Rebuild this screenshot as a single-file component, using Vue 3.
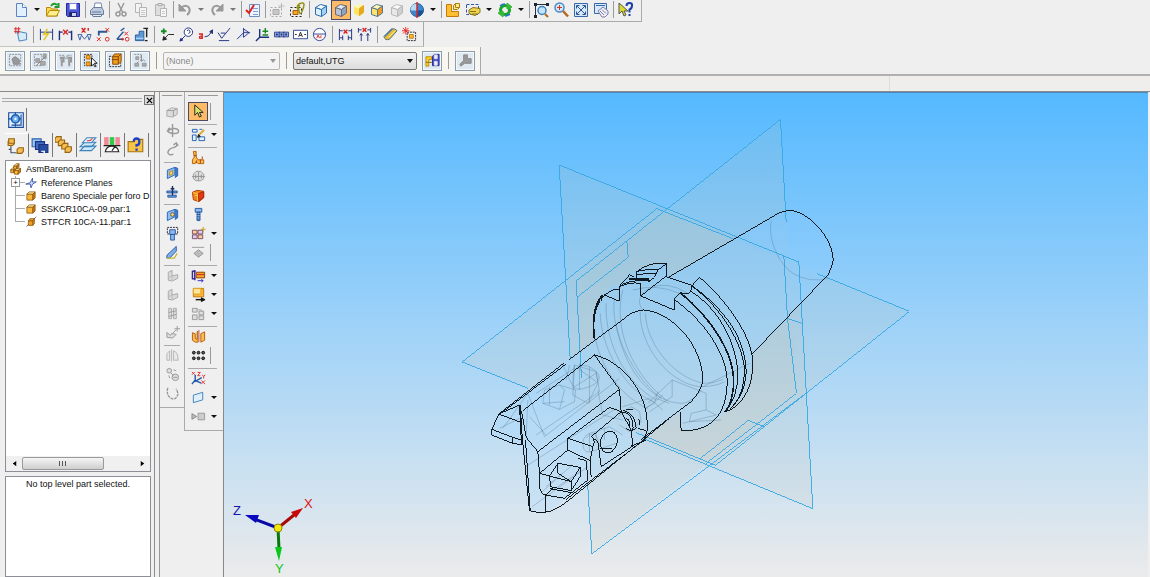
<script setup>
import { ref } from 'vue'

const p = (d, stroke, fill = 'none', w = 1) =>
  `<path d="${d}" stroke="${stroke}" fill="${fill}" stroke-width="${w}"/>`
const box = (x, y, s, f, t, r, o) =>
  p(`M${x} ${y + 3}h${s}v${s}h-${s}z`, o, f) +
  p(`M${x} ${y + 3}l3-3h${s}l-3 3z`, o, t) +
  p(`M${x + s} ${y + 3}l3-3v${s}l-3 3z`, o, r)
const gold = (x, y, s) => box(x, y, s, '#f8b83c', '#ffe79a', '#c97a12', '#8a5208')
const wire = (c, f, t, r) =>
  p('M2.5 5.5l6 2v7l-6-2z', c, f) + p('M2.5 5.5l5-3 6 1.500-5 3.500z', c, t) + p('M8.500 7.500l5-3.500v7l-5 3.500z', c, r)
const chip = (x, y) => p(`M${x} ${y + 1}l1.500-1.500h4v3.500l-1.500 1.500h-4z`, '#9a6410', '#f5bd52')
const planeBlue = p('M2.500 5.500l8-3v8l-8 4z', '#2a62b8', '#8cc0f2') + p('M10.500 2.500l3 1v8l-3 2', '#2a62b8', '#3d78c8')
const grayL = p('M3.500 4.500l4-2v6l6-1.500v4l-6 3-4-1z', '#a9a9a9', '#d9d9d9') + p('M7.500 8.500l-4 2M7.500 8.500v5', '#bbb')

const icons = {
  new: p('M3.500 1.500h6l4 4v9h-10z', '#5b86c4', '#e2f0ff') + p('M9.500 1.500v4h4', '#5b86c4', '#fff'),
  open: p('M1.500 5.500h4l1 1.500h6v7h-11z', '#b98b10', '#ffd84d') + p('M1.500 14l3-5.500h10l-3 5.500z', '#b98b10', '#fff08a') + p('M6 4q3-4 6-1M13.500 1v4h-4', '#1b9c2c', 'none', 2),
  save: p('M1.500 1.500h13v13h-12l-1-1z', '#242a9a', '#4a55d8') + p('M4.500 1.500h7v6h-7z', '#8088dd', '#fff') + p('M4.500 10.500h7v4h-7z', '#22266a', '#cdd2f4') + p('M6 11v3', '#22266a', 'none', 2),
  print: p('M5 6l1-5h6l1 5', '#7788a8', '#fff') + p('M1.500 8.500l3-3h8l2 3v4h-13z', '#687c9c', '#bccbe0') + p('M3 12.500h10l-1 2H4z', '#687c9c', '#e7eef8') + p('M3 10h9', '#6a7c98'),
  cut: p('M5 1l4.500 9M11 1L6.500 10', '#999', 'none', 1.500) + '<circle cx="5" cy="12" r="2" stroke="#999" fill="none" stroke-width="1.500"/><circle cx="11" cy="12" r="2" stroke="#999" fill="none" stroke-width="1.500"/>',
  copy: p('M2.500 1.500h6v9h-6z', '#b4b4b4', '#f4f4f4') + p('M6.500 5.500h7v9h-7z', '#b4b4b4', '#f4f4f4') + p('M8 8.500h4M8 10.500h4M8 12.500h4', '#c8c8c8'),
  paste: p('M2.500 2.500h9v11h-9z', '#b4b4b4', '#dedede') + p('M5 1.500h4v2H5z', '#aaa', '#eee') + p('M7.500 6.500h6v8h-6z', '#b4b4b4', '#f8f8f8') + p('M9 9.500h3M9 11.500h3', '#c8c8c8'),
  undo: p('M4 6q4-4 7.500-1 3 4-1.500 8', '#9a9a9a', 'none', 2) + p('M2 2v7h7z', '#9a9a9a', '#9a9a9a'),
  redo: p('M12 6q-4-4-7.500-1-3 4 1.500 8', '#9a9a9a', 'none', 2) + p('M14 2v7H7z', '#9a9a9a', '#9a9a9a'),
  check: p('M4.500 2.500h10v12h-10z', '#6f8fc0', '#edf5ff') + p('M8 6.500h5M8 9.500h5M8 12.500h5', '#7da0d8') + p('M1 8l3 3 5-8', '#e02020', 'none', 2),
  grayDash: '<path d="M1.500 5.500h11v9h-11z" fill="none" stroke="#aaa" stroke-dasharray="2 2"/>' + p('M4 7.500h6v5H4z', '#aaa', '#c8c8c8') + p('M12.500 1v6M9.500 4h6', '#bbb'),
  dashLink: '<path d="M1.500 5.500h11v9h-11z" fill="none" stroke="#222" stroke-dasharray="2 2"/>' + p('M4 8.500h5v4H4z', '#a8600c', '#f6a62c') + p('M9 8q-2-5 2-6.500t4 1-2 7-3-.5 1-6', '#94921a', 'none', 1.500),
  wire1: wire('#2b6cae', '#dcf0ff', '#f4fbff', '#a6d2f4'),
  wire2: wire('#6b6a78', '#b8c4d8', '#dfe7ef', '#8fa4c4'),
  shade1: p('M3.500 4.500l5 2v7l-5-2z', '#ffe468', '#ffe468') + p('M3.500 4.500l4-2 5 1-4 3z', '#fff7b0', '#fff7b0') + p('M8.500 6.500l4-3v7l-4 3z', '#e7a91c', '#e7a91c'),
  shade2: wire('#53779a', '#ffe468', '#fff7b0', '#f09c18'),
  shade3: wire('#b9b9b9', '#e8e8e8', '#f8f8f8', '#cfcfcf'),
  globe: '<circle cx="8" cy="8" r="6.500" fill="#3c87cf" stroke="#2a5d9a"/>' + p('M8 1.500q-7 1-6.500 7h6.500z', 'none', '#b9dcf5') + p('M8 8.500h6.500q-1 6-6.500 6z', 'none', '#1c4f96') + p('M8 0v16', '#d02828', 'none', 1.500),
  goldL: p('M1.500 2.500h5v7h7v5h-12z', '#c47a0c', '#ffbf2e') + p('M8.500 3.500l2-2h4v4l-2 2h-4z', '#a8820c', '#ffe98a') + p('M10.500 1.500v4h4', '#a8820c'),
  dashSel: '<path d="M1.500 2.500h12v10h-12z" fill="none" stroke="#2b57b0" stroke-dasharray="3 1.500"/>' + p('M4 8l4-2.500 7 1v4l-5 3-6-2z', '#8c7410', '#f0d452') + p('M5 9.500h6M7 12h5', '#857018'),
  swirl: '<circle cx="8" cy="8" r="4.500" fill="none" stroke="#1aa628" stroke-width="3"/>' + p('M3 4q2-2 5-2M13 12q-2 2-5 2', '#2d6fd0', 'none', 1.500) + p('M10 1l5 4-5 2zM6 15l-5-4 5-2z', '#36b93a', '#36b93a'),
  zoomArea: p('M2.500 14V2.500H14', '#26303e', 'none', 1) + p('M1 1h3v3H1zM13 1h3v3h-3zM1 13h3v3H1z', 'none', '#20242c') + '<circle cx="9" cy="8.500" r="4" fill="#bfe4ff" stroke="#3f7fb8" stroke-width="1.500"/>' + p('M12 12l3 3', '#b36a1a', 'none', 2),
  zoomIn: '<circle cx="6.500" cy="5.500" r="4.500" fill="#cfeaff" stroke="#4d8bc4" stroke-width="1.500"/>' + p('M4 5.500h5M6.500 3v5', '#d8341c') + p('M10 9l5 5.500', '#b36a1a', 'none', 2.500),
  fit: p('M1.500 1.500h13v13h-13z', '#3768a8', '#d7e9fb') + p('M4 4l8 8M12 4l-8 8', '#2c5593', 'none', 1) + p('M3.500 6.500V3.500h3M9.500 3.500h3v3M12.500 9.500v3h-3M6.500 12.500h-3v-3', '#2c5593'),
  pan: p('M1.500 1.500h12v10h-12z', '#3768a8', '#d7e9fb') + p('M3 3.500h9', '#3768a8') + p('M5 9l5-4 5 4v3l-3 3h-3z', '#777faa', '#f3f0f7') + p('M7 9l4 4M9 7.500l4 4', '#777faa'),
  help: p('M2 1v11l3-3 2 5 2-1-2-4h4z', '#555', '#d8dc30') + p('M9.500 4q0-3 3-3t2.500 3-2.500 3.500v3M12.500 12v2', '#1c3fa8', 'none', 2),

  sketch: p('M4.500 4.500l10 2v7l-8 1.500z', '#3f7fb8', '#d5ebfa') + p('M1 2h7M1 5h6M3 0v7M6 0v7', '#d22'),
  dim1: p('M1.500 2v12M14.500 2v12M2 5.500h12', '#1d2f80') + p('M9 2L5 8l5-1-5 7', '#e0c61a', 'none', 1.500),
  dim2: p('M1.500 4v10M14.500 4v10M2 5.500h3M11 5.500h3', '#1d2f80', 'none', 1.500) + p('M5.500 3l5 5M10.500 3l-5 5', '#d22', 'none', 1.500),
  dim3: p('M1 8h4l-2 6zM11 8h4l-2 6zM5 9l3 4 3-4', '#3a5fa8', 'none', 1) + p('M5 1l4 5M9 1L5 6M12 1v3', '#d22', 'none', 1.500),
  dim4: p('M3 9V5h9', '#2c5593', 'none', 2) + p('M1 11l4 4M5 11l-4 4M10 1l4 4M14 1l-4 4', '#d22') + '<circle cx="12" cy="13" r="2" stroke="#d22" fill="none"/>',
  dim5: p('M2 13l7-8M2 13h7M6 4l4-3', '#2c5593', 'none', 1.500) + p('M10 5l4 4M14 5l-4 4', '#d22') + '<circle cx="13" cy="13" r="2" stroke="#d22" fill="none"/><circle cx="8" cy="13" r="1" stroke="#d22" fill="none"/>',
  dim6: p('M1.500 8.500h4v-4h5v10h-9z', '#2a5a98', '#5f9ad6') + p('M10 1.500h5M13.500 2v9M11.500 14.500h3', '#222', 'none', 1.500) + p('M2 12h8', '#cfe4fa'),
  plusLine: p('M1 4.500h6M4 1.500v6', '#168a22', 'none', 2) + p('M4 13l5-5h6', '#222', 'none', 1) + p('M3 14l1-4 3 3z', '#222', '#222'),
  balloon: '<circle cx="10" cy="5.500" r="4.500" fill="#fff" stroke="#1d2f80"/>' + p('M7 9l-6 6M8.500 4q1.500-2 3 0t-1.500 3', '#1d2f80') + p('M1 15l1-3 2 2z', '#1d2f80', '#1d2f80'),
  aLine: p('M1 7.500h3.500v4.500H2q-1.500-2 2-2.500', '#d22', 'none', 1.500) + p('M7 10.500l4-1 4-5', '#1d2f80', 'none', 1) + p('M15.500 3v4l-3-2z', '#1d2f80', '#1d2f80'),
  rough: p('M1 6l4 6 9-11M4 6.500h5M2 14.500h11', '#1d2f80', 'none', 1),
  weld: p('M1 13l7-7h7M8 1v10M8 11l6-5-6-4', '#2c3f90', '#cfd9f4'),
  edgeC: p('M5 2v9h10M5 11l-4 4', '#1d2f80', 'none', 1.500) + p('M8 4.500h6M11 1v6M8 8.500h6', '#168a22', 'none', 1.500),
  fcf: p('M.5 5.500h15v5h-15z', '#2a4494', '#a3b6e4') + p('M5.500 5v6M10.500 5v6', '#1d2f80') + p('M2 8h2M7 8h2M12 8h2', '#1d2f80', 'none', 2),
  datumF: p('M.5 3.500h15v9h-15z', '#2a4494', '#fff') + p('M2 8h2M12 8h2M6 10.500l2-5 2 5M7 9h2', '#222'),
  datumT: '<circle cx="8" cy="8" r="6.500" fill="#fff" stroke="#2c3f90"/>' + p('M1.500 7.500h13', '#2c3f90') + p('M5 12l1.500-3.500L8 12M9.500 9v3', '#d22'),
  dx1: p('M1.500 2v12M14.500 2v12M5 9v5M11 9v5M2 11.500h3M11 11.500h3', '#1d2f80') + p('M2 4h3M11 4h3', '#1d2f80') + p('M6 3l4 4M10 3L6 7', '#d22', 'none', 1.500),
  dx2: p('M1.500 1v5M14.500 1v5M2 3h3M11 3h3M4.500 7v8M11.500 7v8M3 9l1.500-2L6 9M10 9l1.500-2L13 9', '#1d2f80') + p('M6 1l4 4M10 1L6 5', '#d22', 'none', 1.500),
  ruler: p('M1 10l8-8q4-1 6 2l-8 9q-5 2-6-3z', '#54707c', '#e6bc3a') + p('M2 10l8-8', '#3c78b8', 'none', 1.500) + p('M6 11l7-7', '#fff0a0'),
  flash: '<path d="M5.500 5.500h9v9h-9z" stroke="#223" fill="none" stroke-dasharray="2 1"/>' + p('M8 8h4v4H8z', '#c47a0c', '#ffbf2e') + p('M0 4h8M4 0v8M1 1l6 6M7 1L1 7', '#e22', 'none', 1),

  dashA: '<path d="M1.500 1.500h12v12h-12z" stroke="#8b8f95" fill="none" stroke-dasharray="2 1"/>' + p('M5 9q-2-4 3-5l4 3v5H6z', '#888', '#999'),
  dashB: '<path d="M1.500 1.500h8v12h-8z" stroke="#8b8f95" fill="none" stroke-dasharray="2 1"/>' + p('M3 6h4v4H3zM11 1h3v5h-3zM8 9h5v4H8z', '#999', '#aaa') + p('M3 14L14 3', '#888'),
  dashC: '<path d="M1.500 2.500h5v3h3v-3h5" stroke="#8b8f95" fill="none" stroke-dasharray="2 1"/>' + p('M2 5h4v4H4v5M10 5h4v4h-2v5', '#999', '#aaa', 2),
  pick: '<path d="M1.500 1.500h8v12h-8z" stroke="#333" fill="none" stroke-dasharray="2 1"/>' + p('M3.500 2.500h4v4h-4zM3.500 9.500h4v4h-4z', '#b56a08', '#ffa91e') + p('M9 5v9l2-2 2 3 1-1-2-3h3z', '#111', '#fff'),
  stack: '<path d="M1.500 3.500h12v11h-12z" stroke="#333" fill="none" stroke-dasharray="2 1"/>' + p('M5 4l2-3h7v8l-3 3H5z', '#8c4b04', '#f59d1a') + p('M5 4h6v8M11 4l3-3M4 7h7', '#7d4208'),
  dashD: '<path d="M1.500 1.500h7v7" stroke="#8b8f95" fill="none" stroke-dasharray="2 1"/>' + p('M3 4h3v3H3zM2 11h4v3H2zM10 11h4v3h-4z', '#999', '#aaa') + p('M9 2v7l2-2 2 2M6 9l-2 2', '#888'),
  saveCfg: p('M1 4h6v3H4v7H1z', '#bb8d08', '#ffcf2e') + p('M1 10h8', '#8e6a05') + p('M8 3.500l2-2h5v12H8z', '#242a9a', '#4855bc') + p('M10 2h3v4h-3zM10 9h3v4h-3z', '#dde', '#eef'),
  blob: p('M6 2h4v4h4v5H7l-4 3-1-2 4-4z', '#888', '#999'),

  person: p('M1.500 1.500h13v13h-13z', '#1b4d9c', '#e4f1fd') + '<circle cx="7.500" cy="7" r="3.500" fill="#6fb2ee" stroke="#2261b8" stroke-width="1.500"/><circle cx="7.500" cy="7" r="1" fill="#fff"/>' + p('M7.500 1v2M7.500 11v3M1 7h3M11 7h2M12.500 3v10M4 12.500h8', '#1b4d9c'),
  tTree: chip(1, 3) + p('M3.500 8v6h5M3.500 11h-2', '#456') + chip(9, 10) + p('M1.500 1.500h5v4h-5z', '#9a6410', '#f5bd52'),
  tLib: p('M1 2.500h8v7H1z', '#2f62ae', '#98c4f0') + p('M4 5h8v7H4z', '#1d2f80', '#3f6fc4') + p('M7 7.500h8v7H7z', '#1d2f80', '#254c9e') + p('M9 13.500h3v1.500', '#eee', '#fff'),
  tFam: chip(0, 1) + chip(3, 4) + chip(6, 7) + chip(9, 10),
  tLay: p('M1 13l4-4h10l-4 4zM1 9.500l4-4h10l-4 4z', '#3d82ba', '#cde9f8') + p('M3 6l4-4.500h8L11 6z', '#3d82ba', '#e8f5fc') + p('M7 4q3 1 5-2', '#d33'),
  tSens: p('M1 1h4v7H1z', 'none', '#f2899b') + p('M6 1h4v7H6z', 'none', '#35c948') + p('M11 1h4v7h-4z', 'none', '#f2899b') + p('M.5 8.500h15M2 14q1-5 6-5t6 5zM8 13l3-4', '#222', '#fff'),
  tHelp: p('M1 5h5l1-2h7v11H1z', '#a47412', '#f8c443') + p('M6 5q0-3 2.500-3T11 5 8.500 8v1.500M8.500 11v2', '#1c3fc8', 'none', 2),

  asm: gold(1, 6, 4) + gold(6, 7, 5) + gold(5, 1, 4),
  refp: p('M1 9.500l6-2 3-6v5l5 0-5 3-2 5-1-5z', '#223f9c', '#cfdcff'),
  part: gold(2.5, 2.500, 8),
  part2: p('M4.500 6.500l2-3h6v6l-2 3h-6z', '#8a5208', '#f0a024') + p('M4.500 6.500h6v6M10.500 6.500l2-3M2 14l3-3M12 4l3-3', '#6b4510'),

  g1: p('M2 7l5-3 6 1v6l-5 3-6-1z', '#aaa', '#dcdcdc') + p('M2 7h7l4-2M9 7v6', '#999'),
  g2: p('M8 1v14M2 9q6-5 12-2M5 5q-5 5 3 6t6-4', '#999', 'none', 1.500),
  g3: p('M12 1q2 4-3 5T3 11q1 4 6 2M9 3l3-2 2 3', '#999', 'none', 1.500),
  cut1: planeBlue + p('M5 7l3-1v4l-3 1z', '#c48a10', '#ffd86a'),
  cut2: p('M2 7.500h11v2H2zM3 12h9v2H3z', '#2958a0', '#6fa6e4') + p('M8 2v10M6 5h4', '#1d2f60', '#2a4a80', 1.500),
  hole: planeBlue + '<circle cx="8" cy="8" r="2" fill="#ffd86a" stroke="#555"/>',
  dashBolt: '<path d="M2.500 1.500h11v7h-11z" stroke="#223" fill="none" stroke-dasharray="2 1"/>' + p('M5 4h6v5H5zM6 9h4v6H6z', '#2958a0', '#8cb8ec'),
  cham: p('M2 11L12 1.500v5L5 14H2z', '#2958a0', '#7db0ec') + p('M2 14h8l3-5', '#c9b83a', 'none', 1.500),
  gl: grayL,
  gbar: p('M4 2.500h3v11H4zM9 2.500h3v11H9z', '#aaa', '#ddd') + p('M4 7l8-2M4 11l8-2', '#999'),
  gplus: p('M2 8v5l6 1 4-4-5-1-1 2-4-3zM13 1v6M10 4h6M8 9l4-4', '#999', '#ddd'),
  gmir: p('M7 1.500v13M2 6l3-3v10H2zM9 3q5 1 5 10h-5z', '#b4b4b4', '#e8e8e8'),
  gpat: '<circle cx="4.500" cy="4" r="2.500" fill="#ddd" stroke="#999"/><circle cx="11" cy="11" r="3.500" fill="#ddd" stroke="#999"/>' + p('M6 6l3 3M9 3l3 1M4 9l1 3M9 11h4', '#999'),
  gcur: '<path d="M3 2Q1 9 6 13q6 3 8-5l-2-5" stroke="#999" fill="none" stroke-width="1.500" stroke-dasharray="3 1"/>',

  arrow: p('M4 1v11l3-3 2 5 2-1-2-4h4z', '#222', '#d9e26a'),
  layout: p('M1.500 2.500h5v3h-5zM1.500 8.500h4v6h-4zM8.500 10.500h6v4h-6z', '#2261b8', '#e2f2ff') + p('M8 9l6-6', '#d8a820', 'none', 2) + p('M7 11l1-3 2 2z', '#222', '#222') + p('M9 2.500h3', '#2261b8'),
  bend: p('M2.500 1.500h3v6l2 3h6v4h-6l-2-2-1 2h-3v-4l2-3z', '#b35d08', '#ffbd52') + p('M3 6h3M6 11v3M10 10v4M12 7v3', '#b33a08'),
  gconn: p('M2.500 5.500l3-3h5l3 3v5l-3 2h-5l-3-2zM8 3v10M1 8h14', '#999', '#ddd') + p('M5 6v4M11 6v4', '#888'),
  ocube: p('M1.500 4.500l5-2 7 1v7l-5 4-6-2z', '#b33a08', '#f2841c') + p('M7.500 6l6-2v6l-5 4z', '#a62808', '#e23a10') + p('M2 5l5 1v8M4 8h3', '#ffd24a'),
  bolt: p('M4.500 1.500h7v4h-7zM6.500 5.500h3v9h-3z', '#2958a0', '#8cb8ec') + p('M6 8h4M6 10.500h4M6 13h4', '#2958a0'),
  grid: p('M1.500 4.500h5v4h-5zM7.500 9.500h5v4h-5z', '#7a4a6a', '#ffd08a') + p('M7.500 4.500h5v4h-5zM1.500 9.500h5v4h-5z', '#7a4a6a', '#ded0e8') + p('M13 1v5M10.500 3.500h5', '#c8a010'),
  gdia: p('M1 2.500h13', '#999') + p('M8 5l5 4-5 4-5-4z', '#999', '#bbb'),
  move: p('M5.500 4.500h9v6h-9z', '#8a4208', '#f6a12a') + p('M1.500 3v9M1 3.500h4M1 11.500h4M4 2v11', '#3a2a98', 'none', 1.500) + p('M7 13.500h6M11 12l2 1.500-2 1.500', '#3a2ac8') + p('M6 7h8', '#c22'),
  drag: p('M2.500 1.500h11v9h-11z', '#c47a0c', '#f6b83a') + p('M2.500 1.500h8v6h-8z', '#e0a020', '#ffe69a') + p('M5 13.500h7', '#111', 'none', 1.500) + p('M11 11.500l4 2-4 2z', '#111', '#111'),
  ggrid: p('M1.500 2.500h5v4h-5zM8.500 5.500h5v4h-5zM1.500 9.500h5v5h-5zM8.500 10.500h5v4h-5z', '#999', '#ddd') + p('M6 4h5v2', '#aaa'),
  mirror: p('M1.500 4l3 1v5l2 1V3l1-1v12h-3l-3-2zM14.500 3l-4 2v9l4-2z', '#b35d08', '#ffbd52') + p('M8.500 1v13', '#c66'),
  dots: '<g fill="#555" stroke="#111"><circle cx="3" cy="5" r="1.500"/><circle cx="8" cy="5" r="1.500"/><circle cx="13" cy="5" r="1.500"/><circle cx="3" cy="11" r="1.500"/><circle cx="8" cy="11" r="1.500"/><circle cx="13" cy="11" r="1.500"/></g>',
  xyz: p('M4.500 4v7l7-4M4 10l7 3M4 10l-3 4', '#2357a8', 'none', 1.500) + p('M1 1l3 3M4 1L1 4M7 1.500h3L7 5h3M11 10l4 4M15 10l-4 4M12 4l1.500 2L15 4M13.500 6v2', '#d33'),
  plane: p('M2.500 5.500l10-3v8l-10 3z', '#3d82ba', '#ddf0fb'),
  gplay: p('M1 5l5 3-5 3z', '#888', '#bbb') + p('M7.500 4.500h7v7h-7z', '#999', '#ccc')
}

const row1 = 'new v open save | print | cut copy paste | undo u redo u | check | grayDash dashLink | wire1 wire2* shade1- shade2 shade3 globe v | goldL dashSel v swirl v | zoomArea zoomIn fit pan | help'.split(' ')
const row2 = 'sketch | dim1 dim2 dim3 dim4 dim5 dim6 | plusLine balloon aLine rough weld edgeC fcf datumF datumT | dx1 dx2 | ruler flash'.split(' ')
const row3 = ['dashA', 'dashB', 'dashC', 'pick', 'stack', 'dashD']
const col1 = 'g1 g2 g3 | cut1 cut2 | hole dashBolt cham | gl gl gbar gplus | gmir gpat gcur'.split(' ')
const col2 = 'arrow*/ | layoutv | bend gconn ocube bolt gridv gdia/ | movev dragv ggridv | mirror dots/ | xyz planev gplayv'.split(' ')
const tabs = ['tTree', 'tLib', 'tFam', 'tLay', 'tSens', 'tHelp']
const tree = [
  { icon: 'refp', text: 'Reference Planes', open: true },
  { icon: 'part', text: 'Bareno Speciale per foro D' },
  { icon: 'part', text: 'SSKCR10CA-09.par:1' },
  { icon: 'part2', text: 'STFCR 10CA-11.par:1' }
]
const name = (t) => t.replace(/[*/-]|v$/g, '')
const tab = ref('tTree')
const style = ref('none')
const config = ref('utg')
</script>

<template>
  <div class="app">
    <header>
      <div class="bar one">
        <template v-for="(t, i) in row1" :key="i">
          <i v-if="t === '|'" class="sep"></i>
          <button v-else-if="t === 'v' || t === 'u'" class="drop" :class="{ dim: t === 'u' }" aria-label="More"></button>
          <button v-else class="tool" :class="{ on: t.includes('*'), slim: t.includes('-') }" :aria-label="name(t)">
            <svg viewBox="0 0 16 16" v-html="icons[name(t)]"></svg>
          </button>
        </template>
      </div>
      <div class="bar two">
        <template v-for="(t, i) in row2" :key="i">
          <i v-if="t === '|'" class="sep"></i>
          <button v-else class="tool" :aria-label="t"><svg viewBox="0 0 16 16" v-html="icons[t]"></svg></button>
        </template>
      </div>
      <div class="bar three">
        <button v-for="t in row3" :key="t" class="framed" :aria-label="t"><svg viewBox="0 0 16 16" v-html="icons[t]"></svg></button>
        <i class="sep"></i>
        <span class="pick off">
          <select v-model="style" aria-label="Style" disabled><option value="none">(None)</option></select>
        </span>
        <i class="sep"></i>
        <span class="pick">
          <select v-model="config" aria-label="Configuration"><option value="utg">default,UTG</option></select>
        </span>
        <button class="framed" aria-label="Save configuration"><svg viewBox="0 0 16 16" v-html="icons.saveCfg"></svg></button>
        <i class="sep"></i>
        <button class="framed" aria-label="Activate part"><svg viewBox="0 0 16 16" v-html="icons.blob"></svg></button>
      </div>
      <div class="ribbon"><i></i></div>
    </header>

    <main>
      <aside class="dock">
        <div class="grip"><i></i><button class="close" aria-label="Close">
          <svg viewBox="0 0 8 8"><path d="M1 1l6 6M7 1l-6 6" stroke="#000" stroke-width="1.500" /></svg>
        </button></div>
        <button class="pane" aria-label="EdgeBar"><svg viewBox="0 0 16 16" v-html="icons.person"></svg></button>
        <div class="tabs">
          <button v-for="t in tabs" :key="t" :class="{ cur: t === tab }" :aria-label="t" @click="tab = t">
            <svg viewBox="0 0 16 16" v-html="icons[t]"></svg>
          </button>
        </div>
        <div class="panel">
          <ul class="tree">
            <li class="root"><svg viewBox="0 0 16 16" v-html="icons.asm"></svg><span>AsmBareno.asm</span></li>
            <li v-for="n in tree" :key="n.text">
              <b class="branch"><em v-if="n.open">+</em></b>
              <svg viewBox="0 0 16 16" v-html="icons[n.icon]"></svg><span>{{ n.text }}</span>
            </li>
          </ul>
          <div class="scroll">
            <button aria-label="Scroll left"><svg viewBox="0 0 8 8"><path d="M6 1v6L2 4z" /></svg></button>
            <div class="track"><div class="thumb"><i></i><i></i><i></i></div></div>
            <button aria-label="Scroll right"><svg viewBox="0 0 8 8"><path d="M2 1v6l4-3z" /></svg></button>
          </div>
        </div>
        <div class="note">No top level part selected.</div>
      </aside>

      <div class="rail a">
        <div class="strip">
          <template v-for="(t, i) in col1" :key="i">
            <i v-if="t === '|'" class="hsep"></i>
            <button v-else class="tool" :aria-label="t"><svg viewBox="0 0 16 16" v-html="icons[t]"></svg></button>
          </template>
        </div>
      </div>
      <div class="rail b">
        <div class="strip">
          <template v-for="(t, i) in col2" :key="i">
            <i v-if="t === '|'" class="hsep"></i>
            <div v-else class="line">
              <button class="tool" :class="{ on: t.includes('*') }" :aria-label="name(t)"><svg viewBox="0 0 16 16" v-html="icons[name(t)]"></svg></button>
              <button v-if="/v$/.test(t)" class="drop" aria-label="More"></button>
              <i v-if="t.includes('/')" class="sep"></i>
            </div>
          </template>
        </div>
      </div>

      <section class="view">
        <svg class="model" viewBox="225 93 923 484">
          <defs>
            <linearGradient id="skin" x1="0" y1="0" x2="0" y2="1">
              <stop offset="0" stop-color="#7ec6fd" />
              <stop offset=".5" stop-color="#a2d5fa" />
              <stop offset="1" stop-color="#c4e0f5" />
            </linearGradient>
          </defs>
          <g fill="#d0c8b0" fill-opacity=".14">
            <path d="M560 165L799 262 813 509 574 412z" />
            <path d="M781 119L576 281 592 554 797 393z" />
            <path d="M463 362L657 208 910 311 716 465z" />
          </g>
          <g transform="translate(450 100) scale(.33333)" fill="none" stroke-width="3">
            <path class="skin" d="M660 530L990 338Q1010 330 1030 332C1090 345 1150 420 1151 480Q1150 500 1135 525L908 762C905 850 880 910 825 936Q780 995 695 992L692 935 300 1232 242 1235 218 1035 126 1005 127 988 148 942 435 720C425 640 440 570 510 550L560 510 650 490z" />
            <g class="plane">
              <path d="M362 775L329 195 1048 486 1090 1226 585 1017" />
              <path d="M1010 366L993 58 380 543 396 835M1003 468L1014 655 1041 880 932 965M1069 880L427 1362 414 1145" />
              <path d="M235 865L38 786 622 326 850 416M1103 521L1380 634 798 1096 560 998" />
              <path d="M532 423L536 472 382 592M1014 655L1057 670M752 1076L896 961 943 980M932 965L770 1090" />
            </g>
            <g class="ghost">
              <path d="M966 362C955 400 975 480 1030 520Q1080 550 1140 535" />
              <g transform="translate(360 420)">
                <path d="M92 220C95 330 170 450 250 485M110 190C105 310 170 430 260 480M135 175C120 270 190 410 275 475M160 150C130 260 185 400 290 480M78 298C100 400 170 480 235 505" />
                <path d="M222 210C200 190 210 160 240 145Q290 120 355 160M212 215C210 320 300 430 390 440Q440 440 465 425M228 220C230 310 310 410 400 430Q430 432 460 418M140 250C160 380 240 490 340 490Q370 485 395 450" />
                <path d="M235 490L308 420V470L240 515M308 420L410 460V510L365 520 360 545M410 510L440 525 340 550M360 545L455 540M540 370L400 440M190 150Q260 130 330 160M260 475L300 490M225 505L255 490 265 455" />
              </g>
              <g transform="translate(0 720)">
                <path d="M285 150L330 135 378 150 375 185 330 208 280 190zM330 135L345 150 330 208M300 140V195M280 190L345 185M375 75L440 95 445 130 415 190 370 165zM370 95Q400 60 435 90T420 140 370 130 375 75M385 85L440 125M375 140L440 100M390 70V150M420 80V190" />
                <path d="M235 160L160 265M235 160L285 290 510 115M235 180L230 290M150 265L210 235M260 285L450 155 440 95M340 75L375 150M360 75L350 120M240 230L290 285M228 380L500 205M248 500L415 380M260 160L375 85M445 150L460 225 520 240" />
                <path d="M400 310Q400 280 440 275L480 260 520 285M400 310Q400 350 440 330L500 310M410 295Q440 260 450 320M420 280V335M520 200L600 175M505 230L545 200 570 215 575 245 540 275 510 255M590 205L640 165M600 175L640 210" />
                <path d="M290 440L370 375M310 450L390 395M275 458L340 400M440 275V310M465 265V300" />
              </g>
            </g>
            <g class="edge">
              <path d="M660 530L990 338Q1010 330 1030 332C1090 345 1150 420 1151 480Q1150 500 1135 525L908 762" />
              <g transform="translate(360 420)">
                <path d="M0 358L165 235Q190 212 222 210C310 215 400 320 400 420Q398 450 365 485L215 598M75 298C68 240 75 175 130 150L148 148M105 165L150 184V140L158 128 180 105 195 112M150 140Q170 118 245 122M200 118V97Q235 65 290 70V108L214 168V130Q180 125 150 140M200 95Q240 85 265 90L290 72M265 90L255 112 240 124 215 118M200 105Q230 98 262 100M214 168L314 210V178L332 158 355 162M290 110L365 135" />
                <path d="M355 162Q367 155 365 140L390 112C470 180 550 290 550 370C550 440 520 500 465 516M314 178C400 240 475 340 473 430C470 520 430 575 335 572L332 515M365 155C440 200 500 300 505 400Q505 470 470 512M370 140C460 210 520 310 525 390Q525 460 490 498M366 136C470 210 530 300 530 400Q525 470 480 508" />
                <path d="M332 158C420 230 500 340 492 440Q485 500 465 516M75 298C68 240 75 190 100 165M180 118H240" stroke-width="5" />
              </g>
              <g transform="translate(0 720)">
                <path d="M345 68L148 222 127 268 126 285 190 310 216 314M350 72L160 216M148 222L210 195M148 222L216 248M127 268L190 292V310M190 292L216 300M210 195L216 315" />
                <path d="M212 195L218 290 240 512Q270 522 300 515Q340 498 365 475L550 325 660 235M350 478L590 295M228 300L242 512" />
                <path d="M220 212L435 45 510 148 265 335 230 292 216 212M265 335L270 400V440Q272 460 288 465V515M435 45C520 65 600 160 593 270Q590 290 575 310M510 148L515 215M480 202L355 295V330L270 400 300 408M480 202L515 215 545 270 550 318M355 330L422 362 425 412M355 295L430 320 422 362M430 320Q440 300 425 290L515 215M425 290L445 305 455 380 550 318M452 325H488" />
                <ellipse cx="478" cy="306" rx="25" ry="33" transform="rotate(15 478 306)" />
                <path d="M325 370L392 382 365 425 300 408zM300 408L303 440 365 452 392 410V382M365 425V452M303 446L365 458M325 370V400L365 425M288 465L345 475 415 420 410 362 385 355M288 465L310 445" />
                <path d="M512 215Q545 215 550 250T530 265M520 210Q560 225 560 265L545 272M530 235Q545 240 540 260M530 210H550M568 238Q575 245 568 255M565 265L590 272M545 318L590 300" />
              </g>
            </g>
          </g>
        </svg>
        <svg class="triad" viewBox="0 0 90 80">
          <path d="M48 33L24 24" stroke="#0808a8" stroke-width="3" />
          <path d="M15 20l14 0-3 8z" fill="#0808c0" />
          <path d="M48 33L64 20" stroke="#a80808" stroke-width="3" />
          <path d="M73 13l-12 4 5 6z" fill="#c80808" />
          <path d="M48 33L49 54" stroke="#087808" stroke-width="3" />
          <path d="M49 66l-4-14h7z" fill="#08c818" />
          <circle cx="48" cy="33" r="4" fill="#f4e808" stroke="#8c8408" />
          <text x="3" y="20" fill="#1414b0">Z</text>
          <text x="74" y="13" fill="#e01010">X</text>
          <text x="45" y="78" fill="#08c818">Y</text>
        </svg>
      </section>
    </main>
  </div>
</template>

<style>
body { margin: 0; background: #efefef; }
</style>

<style scoped>
.app { min-height: 100vh; display: flex; flex-direction: column; overflow: hidden; font: 9px/14px "Liberation Sans", Arial, sans-serif; color: #111; background: #efefef; }
* { box-sizing: border-box; }
button { border: 0; padding: 0; background: none; flex: none; display: flex; align-items: center; justify-content: center; }
svg { display: block; }
.bar { display: flex; align-items: center; width: max-content; border-right: 1px solid #aaa; border-bottom: 1px solid #aaa; }
.one { height: 22px; padding: 0 6px 2px 11px; }
.two { height: 25px; padding: 0 4px 0 11px; border-bottom-color: #c4c4c4; }
.three { height: 27px; padding: 0 5px; gap: 5px; background: #f8f6f1; border-bottom: 0; }
.tool { width: 20px; height: 20px; }
.tool svg { width: 16px; height: 16px; flex: none; }
.two .tool { width: 19px; }
.two .tool svg { width: 15px; height: 15px; }
.tool.slim { width: 16px; }
.on { background: #fdbb68; border: 1px solid #4b4a62; }
.sep { width: 4px; height: 17px; flex: none; display: flex; justify-content: center; }
.sep::before { content: ""; width: 1px; background: #9a9a9a; }
.two .sep { width: 7px; }
.three .sep { width: 3px; }
.drop { width: 12px; height: 16px; }
.drop::before { content: ""; border: 3px solid transparent; border-top-color: #111; border-bottom: 0; }
.drop.dim::before { border-top-color: #777; }
.framed { width: 20px; height: 20px; border: 1px solid #8b9dae; background: #dfe9f2; box-shadow: inset 0 0 0 1px #f5f9fc; }
.framed svg { width: 15px; height: 15px; }
.pick { position: relative; display: flex; width: 124px; }
.pick.off { width: 117px; }
.pick::after { content: ""; position: absolute; right: 4px; top: 7px; border: 3px solid transparent; border-top: 4px solid #111; border-bottom: 0; pointer-events: none; }
.pick.off::after { border-top-color: #999; }
select { appearance: none; width: 100%; height: 18px; padding: 0 2px; border: 1px solid #777; border-radius: 2px; background: linear-gradient(#f3f3f3, #ddd); font: inherit; color: #111; }
select:disabled { background: #f4f4f4; border-color: #b5b5b5; color: #888; opacity: 1; }
.ribbon { height: 18px; border-top: 2px solid #b0b0b0; border-bottom: 1px solid #8b8b8b; background: #f0eeed; display: flex; }
.ribbon i { width: 77.4%; border-right: 1px solid #ddd; }
main { flex: 1; display: flex; min-height: 0; }

.dock { width: 155px; flex: none; display: flex; flex-direction: column; padding-left: 5px; border-right: 1px solid #8d8d8d; }
.grip { display: flex; align-items: center; height: 16px; gap: 2px; margin-left: -3px; }
.grip i { flex: 1; height: 4px; border: 1px solid #aaa; border-width: 1px 0; }
.close { width: 10px; height: 10px; border: 1px solid #777; background: #ddd; }
.close svg { width: 7px; height: 7px; }
.pane { width: 22px; height: 23px; border-right: 1px solid #777; }
.pane svg { width: 18px; height: 18px; }
.tabs { display: flex; height: 26px; padding-top: 2px; margin-bottom: 3px; }
.tabs button { width: 24px; border-right: 1px solid #777; padding-right: 2px; }
.tabs button.cur { border-top: 1px solid #fff; }
.tabs svg { width: 18px; height: 18px; }
.panel { flex: 1; margin-right: 3px; background: #fff; border: 1px solid #8e8e96; display: flex; flex-direction: column; min-height: 0; }
.tree { list-style: none; margin: 0; padding: 1px 0 0 4px; flex: 1; }
.tree li { display: flex; align-items: center; height: 13px; white-space: nowrap; }
.tree .root { height: 14px; }
.tree svg { width: 12px; height: 12px; flex: none; margin-right: 4px; }
.tree li:not(.root) { padding-left: 1px; }
.branch { position: relative; width: 14px; height: 13px; flex: none; background: linear-gradient(#aaa, #aaa) 4px 6px / 10px 1px no-repeat, linear-gradient(#aaa, #aaa) 4px 0 / 1px 13px no-repeat; }
li:last-child .branch { background-size: 10px 1px, 1px 6px; }
.branch em { position: absolute; left: 0; top: 2px; width: 9px; height: 9px; border: 1px solid #999; background: #fff; font: 8px/7px "Liberation Sans", sans-serif; text-align: center; }
.scroll { display: flex; height: 15px; background: #f0f0f0; padding: 1px 0; }
.scroll button { width: 16px; }
.scroll svg { width: 7px; height: 7px; }
.track { flex: 1; }
.thumb { width: 73%; height: 13px; border: 1px solid #999; border-radius: 2px; background: linear-gradient(#f5f5f5, #cfcfcf); display: flex; gap: 2px; justify-content: center; align-items: center; }
.thumb i { width: 1px; height: 5px; background: #555; }
.note { height: 101px; margin: 4px 3px 0 0; background: #fff; border: 1px solid #8e8e96; text-align: center; }

.rail { flex: none; }
.a { width: 25px; margin-left: 4px; border-left: 1px solid #999; }
.b { width: 40px; border-right: 1px solid #888; }
.strip { display: flex; flex-direction: column; align-items: center; border-bottom: 1px solid #aaa; padding-bottom: 4px; }
.strip::before { content: ""; width: 20px; height: 1px; margin: 3px 0 6px; background: #999; }
.b .strip { border-left: 1px solid #aaa; align-items: flex-start; padding-left: 3px; }
.b .strip::before { width: 30px; }
.rail .tool { height: 19px; }
.rail .tool svg { width: 15px; height: 15px; }
.line { display: flex; align-items: center; }
.hsep { width: 16px; height: 4px; flex: none; border-bottom: 1px solid #aaa; }
.b .hsep { width: 29px; }

.view { flex: 1; min-width: 0; position: relative; margin-right: 2px; border-top: 1px solid #4a88b8; background: linear-gradient(#55b9ff, #a1d3f8 50%, #ebebeb); }
.model { position: absolute; inset: 0; width: 100%; height: 100%; }
.skin { fill: url(#skin); fill-opacity: .6; }
.plane { stroke: #35a7e4; stroke-opacity: .9; }
.ghost { stroke: #4f7391; stroke-opacity: .5; stroke-width: 2; }
.edge { stroke: #101820; }
.plane, .edge { shape-rendering: crispEdges; }
.triad { position: absolute; left: 6px; bottom: 2px; width: 90px; height: 80px; font: 13px "Liberation Sans", sans-serif; }
</style>
